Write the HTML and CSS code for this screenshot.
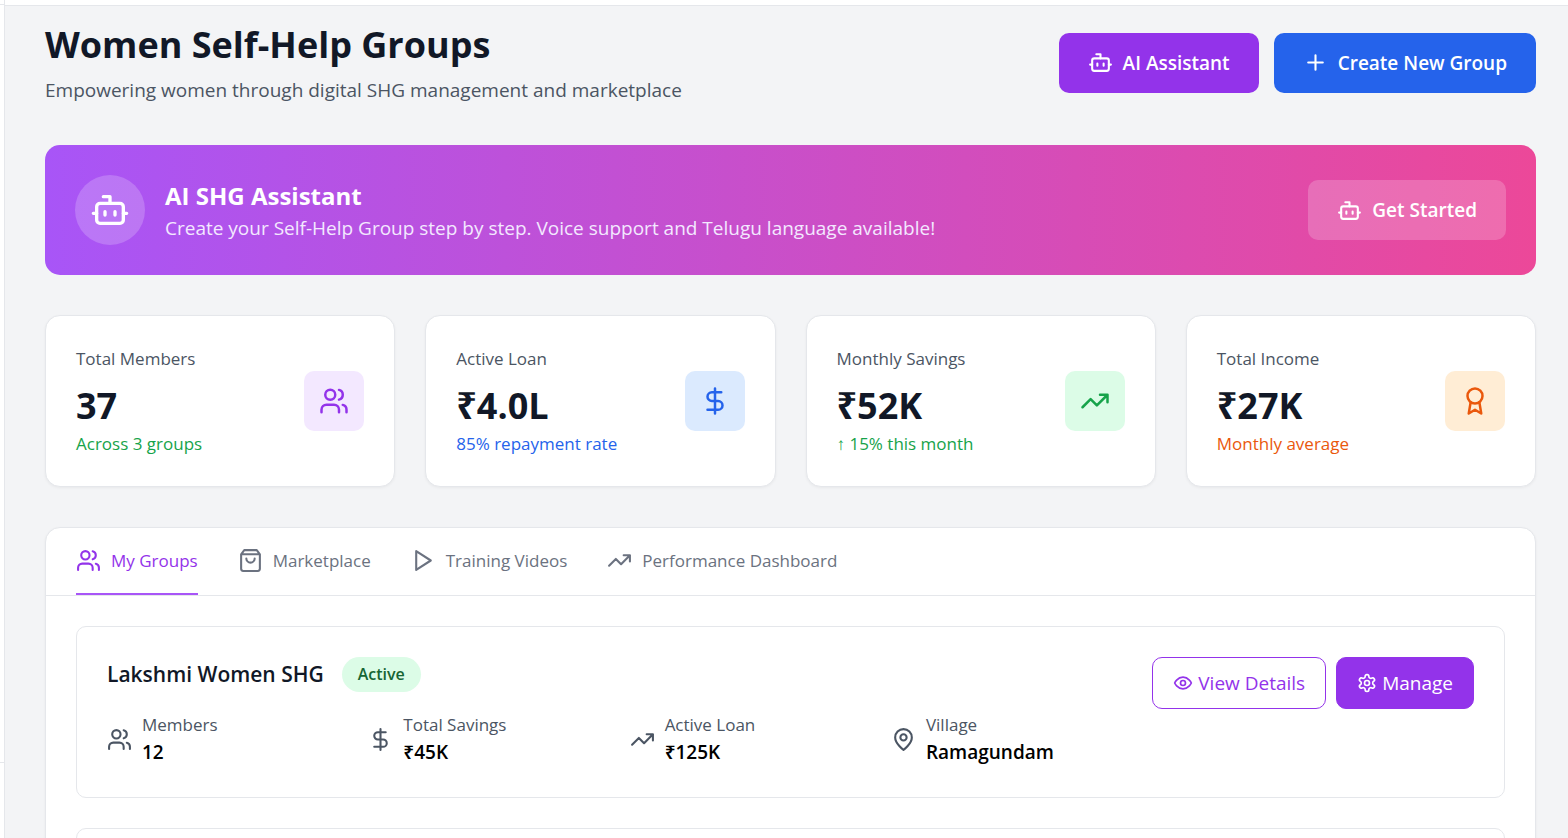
FILE: index.html
```html
<!DOCTYPE html>
<html lang="en">
<head>
    <meta charset="UTF-8">
    <meta name="viewport" content="width=device-width, initial-scale=1.0">
    <title>Women Self-Help Groups</title>
    <link rel="stylesheet" href="styles.css">
</head>
<body>
    <!-- Icon sprite -->
    <svg class="sprite" aria-hidden="true">
        <symbol id="i-bot" viewBox="0 0 24 24">
            <path d="M12 8V4H8"/><rect x="4" y="8" width="16" height="12" rx="2"/>
            <path d="M2 14h2M20 14h2M15 13v2M9 13v2"/>
        </symbol>
        <symbol id="i-plus" viewBox="0 0 24 24"><path d="M5 12h14M12 5v14"/></symbol>
        <symbol id="i-users" viewBox="0 0 24 24">
            <path d="M16 21v-2a4 4 0 0 0-4-4H6a4 4 0 0 0-4 4v2"/><circle cx="9" cy="7" r="4"/>
            <path d="M22 21v-2a4 4 0 0 0-3-3.87M16 3.13a4 4 0 0 1 0 7.75"/>
        </symbol>
        <symbol id="i-dollar" viewBox="0 0 24 24">
            <path d="M12 2v20M17 5H9.500a3.500 3.500 0 0 0 0 7h5a3.500 3.500 0 0 1 0 7H6"/>
        </symbol>
        <symbol id="i-trending" viewBox="0 0 24 24">
            <path d="M22 7l-8.500 8.500-5-5L2 17M16 7h6v6"/>
        </symbol>
        <symbol id="i-award" viewBox="0 0 24 24">
            <circle cx="12" cy="8" r="6"/><path d="M15.477 12.890 17 22l-5-3-5 3 1.523-9.110"/>
        </symbol>
        <symbol id="i-bag" viewBox="0 0 24 24">
            <path d="M6 2 3 6v14a2 2 0 0 0 2 2h14a2 2 0 0 0 2-2V6l-3-4ZM3 6h18M16 10a4 4 0 0 1-8 0"/>
        </symbol>
        <symbol id="i-play" viewBox="0 0 24 24"><path d="M5 3l14 9-14 9V3z"/></symbol>
        <symbol id="i-pin" viewBox="0 0 24 24">
            <path d="M20 10c0 6-8 12-8 12s-8-6-8-12a8 8 0 0 1 16 0Z"/><circle cx="12" cy="10" r="3"/>
        </symbol>
        <symbol id="i-eye" viewBox="0 0 24 24">
            <path d="M2 12s3-7 10-7 10 7 10 7-3 7-10 7-10-7-10-7Z"/><circle cx="12" cy="12" r="3"/>
        </symbol>
        <symbol id="i-settings" viewBox="0 0 24 24">
            <path d="M12.22 2h-.44a2 2 0 0 0-2 2v.18a2 2 0 0 1-1 1.73l-.43.25a2 2 0 0 1-2 0l-.15-.08a2 2 0 0 0-2.73.73l-.22.38a2 2 0 0 0 .73 2.73l.15.1a2 2 0 0 1 1 1.72v.51a2 2 0 0 1-1 1.74l-.15.09a2 2 0 0 0-.73 2.73l.22.38a2 2 0 0 0 2.73.73l.15-.08a2 2 0 0 1 2 0l.43.25a2 2 0 0 1 1 1.73V20a2 2 0 0 0 2 2h.44a2 2 0 0 0 2-2v-.18a2 2 0 0 1 1-1.73l.43-.25a2 2 0 0 1 2 0l.15.08a2 2 0 0 0 2.73-.73l.22-.39a2 2 0 0 0-.73-2.73l-.15-.08a2 2 0 0 1-1-1.74v-.5a2 2 0 0 1 1-1.74l.15-.09a2 2 0 0 0 .73-2.73l-.22-.38a2 2 0 0 0-2.73-.73l-.15.08a2 2 0 0 1-2 0l-.43-.25a2 2 0 0 1-1-1.73V4a2 2 0 0 0-2-2z"/>
            <circle cx="12" cy="12" r="3"/>
        </symbol>
    </svg>

    <div class="app">
        <aside class="sidebar">
            <div class="sidebar-top"></div>
            <div class="sidebar-footer"></div>
        </aside>

        <div class="page">
            <div class="topbar"></div>

            <main class="content">
                <header class="page-header">
                    <div>
                        <h1>Women Self-Help Groups</h1>
                        <p class="subtitle">Empowering women through digital SHG management and marketplace</p>
                    </div>
                    <div class="header-actions">
                        <button type="button" class="btn btn-purple"><svg class="icon"><use href="#i-bot"/></svg>AI Assistant</button>
                        <button type="button" class="btn btn-blue"><svg class="icon"><use href="#i-plus"/></svg>Create New Group</button>
                    </div>
                </header>

                <section class="banner">
                    <div class="banner-icon"><svg class="icon icon-xl"><use href="#i-bot"/></svg></div>
                    <div class="banner-text">
                        <h2>AI SHG Assistant</h2>
                        <p>Create your Self-Help Group step by step. Voice support and Telugu language available!</p>
                    </div>
                    <button type="button" class="btn btn-glass"><svg class="icon"><use href="#i-bot"/></svg>Get Started</button>
                </section>

                <section class="stats-grid">
                    <div class="stat-card">
                        <div>
                            <p class="stat-label">Total Members</p>
                            <p class="stat-value">37</p>
                            <p class="stat-note green">Across 3 groups</p>
                        </div>
                        <div class="stat-icon purple"><svg class="icon icon-lg"><use href="#i-users"/></svg></div>
                    </div>
                    <div class="stat-card">
                        <div>
                            <p class="stat-label">Active Loan</p>
                            <p class="stat-value">₹4.0L</p>
                            <p class="stat-note blue">85% repayment rate</p>
                        </div>
                        <div class="stat-icon blue"><svg class="icon icon-lg"><use href="#i-dollar"/></svg></div>
                    </div>
                    <div class="stat-card">
                        <div>
                            <p class="stat-label">Monthly Savings</p>
                            <p class="stat-value">₹52K</p>
                            <p class="stat-note green">↑ 15% this month</p>
                        </div>
                        <div class="stat-icon green"><svg class="icon icon-lg"><use href="#i-trending"/></svg></div>
                    </div>
                    <div class="stat-card">
                        <div>
                            <p class="stat-label">Total Income</p>
                            <p class="stat-value">₹27K</p>
                            <p class="stat-note orange">Monthly average</p>
                        </div>
                        <div class="stat-icon orange"><svg class="icon icon-lg"><use href="#i-award"/></svg></div>
                    </div>
                </section>

                <section class="panel">
                    <nav class="tabs">
                        <button type="button" class="tab active"><svg class="icon"><use href="#i-users"/></svg>My Groups</button>
                        <button type="button" class="tab"><svg class="icon"><use href="#i-bag"/></svg>Marketplace</button>
                        <button type="button" class="tab"><svg class="icon"><use href="#i-play"/></svg>Training Videos</button>
                        <button type="button" class="tab"><svg class="icon"><use href="#i-trending"/></svg>Performance Dashboard</button>
                    </nav>

                    <div class="groups">
                        <article class="group-card">
                            <div class="group-info">
                                <div class="group-title">
                                    <h3>Lakshmi Women SHG</h3>
                                    <span class="badge">Active</span>
                                </div>
                                <div class="group-stats">
                                    <div class="group-stat">
                                        <svg class="icon"><use href="#i-users"/></svg>
                                        <div>
                                            <p class="name">Members</p>
                                            <p class="value">12</p>
                                        </div>
                                    </div>
                                    <div class="group-stat">
                                        <svg class="icon"><use href="#i-dollar"/></svg>
                                        <div>
                                            <p class="name">Total Savings</p>
                                            <p class="value">₹45K</p>
                                        </div>
                                    </div>
                                    <div class="group-stat">
                                        <svg class="icon"><use href="#i-trending"/></svg>
                                        <div>
                                            <p class="name">Active Loan</p>
                                            <p class="value">₹125K</p>
                                        </div>
                                    </div>
                                    <div class="group-stat">
                                        <svg class="icon"><use href="#i-pin"/></svg>
                                        <div>
                                            <p class="name">Village</p>
                                            <p class="value">Ramagundam</p>
                                        </div>
                                    </div>
                                </div>
                            </div>
                            <div class="group-actions">
                                <button type="button" class="btn-sm outline"><svg class="icon icon-sm"><use href="#i-eye"/></svg>View Details</button>
                                <button type="button" class="btn-sm solid"><svg class="icon icon-sm"><use href="#i-settings"/></svg>Manage</button>
                            </div>
                        </article>
                        <article class="group-card"></article>
                    </div>
                </section>
            </main>
        </div>
    </div>
</body>
</html>
```
FILE: styles.css
```css
* {
    box-sizing: border-box;
}

body {
    margin: 0;
    font-family: "Open Sans", "Noto Sans", sans-serif;
    font-size: 19px;
    line-height: 30px;
    color: #000;
    background: #f3f4f6;
}

h1, h2, h3, p {
    margin: 0;
}

button {
    font-family: inherit;
    cursor: pointer;
}

.sprite {
    display: none;
}

.icon {
    width: 25px;
    height: 25px;
    flex-shrink: 0;
    fill: none;
    stroke: currentColor;
    stroke-width: 2;
    stroke-linecap: round;
    stroke-linejoin: round;
}

.icon-sm { width: 20px; height: 20px; }
.icon-lg { width: 30px; height: 30px; }
.icon-xl { width: 40px; height: 40px; }

/* Shell */
.app {
    display: flex;
    height: 100vh;
    overflow: hidden;
}

.sidebar {
    display: flex;
    flex-direction: column;
    justify-content: space-between;
    width: 5px;
    flex-shrink: 0;
    background: #fff;
    border-right: 1px solid #e5e7eb;
}

.sidebar-top {
    height: 5px;
    border-bottom: 1px solid #e5e7eb;
}

.sidebar-footer {
    height: 76px;
    border-top: 1px solid #e5e7eb;
}

.page {
    flex: 1;
    min-width: 0;
}

.topbar {
    height: 6px;
    background: #fff;
    border-bottom: 1px solid #e5e7eb;
}

.content {
    padding: 14px 32px 40px 40px;
}

/* Header */
.page-header {
    display: flex;
    justify-content: space-between;
    align-items: center;
    margin-bottom: 40px;
}

h1 {
    font-size: 36px;
    line-height: 49px;
    font-weight: 700;
    color: #111827;
    margin-bottom: 6px;
}

.subtitle {
    color: #4b5563;
}

.header-actions {
    display: flex;
    gap: 15px;
}

.btn {
    display: flex;
    align-items: center;
    gap: 10px;
    height: 60px;
    padding: 0 29px;
    border: none;
    border-radius: 10px;
    font-size: 19px;
    font-weight: 600;
    color: #fff;
}

.btn-purple { background: #9333ea; }
.btn-blue { background: #2563eb; }
.btn-glass { background: rgba(255, 255, 255, 0.2); }

/* Assistant banner */
.banner {
    display: flex;
    align-items: center;
    gap: 20px;
    padding: 30px;
    margin-bottom: 40px;
    border-radius: 15px;
    background: linear-gradient(to right, #a855f7, #ec4899);
    color: #fff;
}

.banner-icon {
    display: flex;
    align-items: center;
    justify-content: center;
    width: 70px;
    height: 70px;
    border-radius: 50%;
    background: rgba(255, 255, 255, 0.2);
}

.banner-text {
    flex: 1;
}

.banner-text h2 {
    font-size: 24px;
    line-height: 35px;
    font-weight: 700;
}

.banner-text p {
    color: #f3e8ff;
}

/* Stat cards */
.stats-grid {
    display: grid;
    grid-template-columns: repeat(4, 1fr);
    gap: 30px;
    margin-bottom: 40px;
}

.stat-card {
    display: flex;
    justify-content: space-between;
    align-items: center;
    padding: 30px;
    background: #fff;
    border: 1px solid #e5e7eb;
    border-radius: 15px;
    box-shadow: 0 1px 3px rgba(0, 0, 0, 0.05);
}

.stat-label {
    font-size: 17px;
    line-height: 25px;
    font-weight: 500;
    color: #4b5563;
}

.stat-value {
    margin: 12px 0 3px;
    font-size: 36px;
    line-height: 45px;
    font-weight: 700;
    color: #111827;
}

.stat-note {
    font-size: 17px;
    line-height: 25px;
}

.stat-note.green { color: #16a34a; }
.stat-note.blue { color: #2563eb; }
.stat-note.orange { color: #ea580c; }

.stat-icon {
    display: flex;
    align-items: center;
    justify-content: center;
    width: 60px;
    height: 60px;
    border-radius: 10px;
}

.stat-icon.purple { background: #f3e8ff; color: #9333ea; }
.stat-icon.blue { background: #dbeafe; color: #2563eb; }
.stat-icon.green { background: #dcfce7; color: #16a34a; }
.stat-icon.orange { background: #ffedd5; color: #ea580c; }

/* Tabs panel */
.panel {
    background: #fff;
    border: 1px solid #e5e7eb;
    border-radius: 15px;
    box-shadow: 0 1px 3px rgba(0, 0, 0, 0.05);
}

.tabs {
    display: flex;
    gap: 40px;
    padding: 0 30px;
    border-bottom: 1px solid #e5e7eb;
}

.tab {
    display: flex;
    align-items: center;
    gap: 10px;
    padding: 20px 0;
    border: none;
    border-bottom: 2px solid transparent;
    background: none;
    font-size: 17px;
    line-height: 25px;
    font-weight: 500;
    color: #6b7280;
}

.tab.active {
    border-color: #a855f7;
    color: #9333ea;
}

.groups {
    display: flex;
    flex-direction: column;
    gap: 30px;
    padding: 30px;
}

.group-card {
    display: flex;
    align-items: flex-start;
    gap: 20px;
    min-height: 172px;
    padding: 30px;
    border: 1px solid #e5e7eb;
    border-radius: 10px;
}

.group-info {
    flex: 1;
}

.group-title {
    display: flex;
    align-items: center;
    gap: 18px;
    margin-bottom: 20px;
}

h3 {
    font-size: 21px;
    line-height: 35px;
    font-weight: 600;
    color: #111827;
}

.badge {
    padding: 5px 16px;
    border-radius: 18px;
    background: #dcfce7;
    font-size: 16px;
    line-height: 25px;
    font-weight: 600;
    color: #166534;
}

.group-stats {
    display: grid;
    grid-template-columns: repeat(4, 1fr);
    gap: 20px;
}

.group-stat {
    display: flex;
    align-items: center;
    gap: 10px;
    color: #4b5563;
}

.group-stat .name {
    font-size: 17px;
    line-height: 25px;
}

.group-stat .value {
    font-weight: 600;
    color: #000;
}

.group-actions {
    display: flex;
    gap: 10px;
}

.btn-sm {
    display: flex;
    align-items: center;
    gap: 5px;
    height: 52px;
    padding: 0 20px;
    border: 1px solid #9333ea;
    border-radius: 10px;
    font-size: 19px;
}

.btn-sm.outline {
    background: #fff;
    color: #9333ea;
}

.btn-sm.solid {
    background: #9333ea;
    color: #fff;
}
```
